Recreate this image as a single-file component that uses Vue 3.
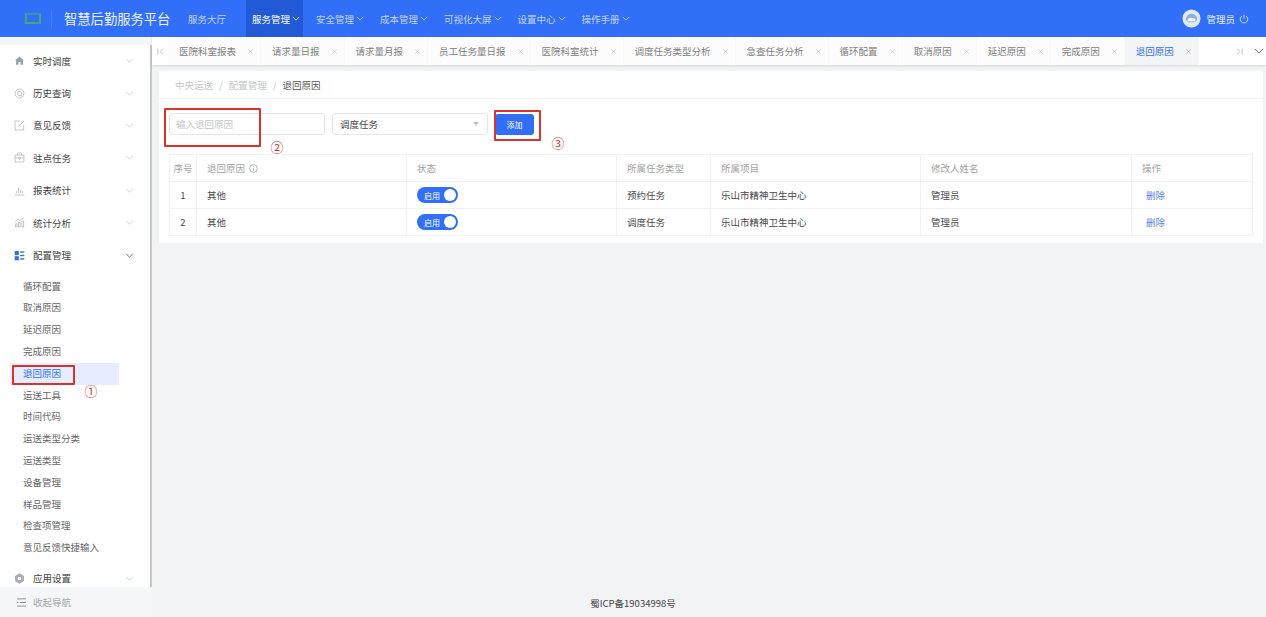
<script setup>
const navItems = [
  { label: '服务大厅', arrow: false },
  { label: '服务管理', arrow: true, active: true },
  { label: '安全管理', arrow: true },
  { label: '成本管理', arrow: true },
  { label: '可视化大屏', arrow: true },
  { label: '设置中心', arrow: true },
  { label: '操作手册', arrow: true }
]

const tabs = [
  '医院科室报表', '请求量日报', '请求量月报', '员工任务量日报', '医院科室统计', '调度任务类型分析',
  '急查任务分析', '循环配置', '取消原因', '延迟原因', '完成原因', '退回原因'
]

const menuTop = [
  { label: '实时调度', paths: ['M1.500 8 8 2l6.500 6H13v6H9.500v-4h-3v4H3V8z'], fill: true },
  { label: '历史查询', paths: ['M8 1.500a6.500 6.500 0 1 0 0 13 6.500 6.500 0 0 0 0-13z', 'M8 5a3 3 0 1 0 0 6 3 3 0 0 0 0-6z', 'M10.500 10.500l2 2'] },
  { label: '意见反馈', paths: ['M14 8v6.500H1.500v-13H9', 'M6.500 9.500l8-8'] },
  { label: '驻点任务', paths: ['M1.500 4.500h13v10h-13z', 'M5 4.500V1.500h6v3', 'M1.500 8.500h13', 'M7 8.500h2v2H7z'] },
  { label: '报表统计', paths: ['M1 14.500h14', 'M3.500 12V9', 'M6.500 12V4', 'M9.500 12V7', 'M12.500 12V9'] },
  { label: '统计分析', paths: ['M2 14.500V10h2.500v4.500z', 'M6.500 14.500V8H9v6.500z', 'M11.500 14.500V6H14v8.500z', 'M1.500 7 5.500 3.500l3 1.500 5-3.500'] }
]

const subMenu = [
  '循环配置', '取消原因', '延迟原因', '完成原因', '退回原因', '运送工具', '时间代码',
  '运送类型分类', '运送类型', '设备管理', '样品管理', '检查项管理', '意见反馈快捷输入'
]

const rows = [
  { id: 1, reason: '其他', type: '预约任务', project: '乐山市精神卫生中心', editor: '管理员' },
  { id: 2, reason: '其他', type: '调度任务', project: '乐山市精神卫生中心', editor: '管理员' }
]
</script>

<template>
  <div class="app">
    <header class="topbar">
      <div class="logo"><span class="logo-mark"></span></div>
      <div class="title">智慧后勤服务平台</div>
      <nav class="nav">
        <a v-for="item in navItems" :key="item.label" class="nav-item" :class="{ active: item.active }">
          {{ item.label }}
          <svg v-if="item.arrow" class="nav-arrow" viewBox="0 0 10 6"><path d="M1 1l4 4 4-4" /></svg>
        </a>
      </nav>
      <div class="user">
        <svg class="avatar" viewBox="0 0 20 20">
          <circle cx="10" cy="10" r="9.500" fill="#dfe9f8" />
          <path d="M4 11c0-3 2.600-6 6-6s6 3 6 6c-1 2-3 3-6 3s-5-1-6-3z" fill="#8fb0dc" />
          <path d="M6 10.500c1.500-1.500 6.500-1.500 8 0v2.500H6z" fill="#f4f7fc" />
        </svg>
        <span class="user-name">管理员</span>
        <svg class="power" viewBox="0 0 12 12"><path d="M3.500 2.500a4.500 4.500 0 1 0 5 0" /><path d="M6 1v4.500" /></svg>
      </div>
    </header>

    <div class="body">
      <aside class="aside">
        <div class="menu">
          <div v-for="m in menuTop" :key="m.label" class="menu-row">
            <svg class="menu-icon" :class="{ filled: m.fill }" viewBox="0 0 16 16"><path v-for="d in m.paths" :key="d" :d="d" /></svg>
            <span class="menu-label">{{ m.label }}</span>
            <svg class="menu-arrow" viewBox="0 0 10 6"><path d="M1 1l4 4 4-4" /></svg>
          </div>
          <div class="menu-row">
            <svg class="menu-icon grid-icon" viewBox="0 0 16 16">
              <rect x="1" y="1.500" width="6" height="6" />
              <rect x="1" y="9" width="6" height="6" />
              <rect x="9" y="2" width="6" height="2" />
              <rect x="9" y="7" width="6" height="2" />
              <rect x="9" y="12" width="6" height="2" />
            </svg>
            <span class="menu-label">配置管理</span>
            <svg class="menu-arrow open" viewBox="0 0 10 6"><path d="M1 1l4 4 4-4" /></svg>
          </div>
          <div class="submenu">
            <div v-for="s in subMenu" :key="s" class="sub-row" :class="{ active: s === '退回原因' }">{{ s }}</div>
          </div>
          <div class="menu-row">
            <svg class="menu-icon gear" viewBox="0 0 16 16">
              <path d="M8 0.500l6.500 3.700v7.600L8 15.500l-6.500-3.700V4.200z" />
              <circle cx="8" cy="8" r="2.500" fill="#fff" />
            </svg>
            <span class="menu-label">应用设置</span>
            <svg class="menu-arrow" viewBox="0 0 10 6"><path d="M1 1l4 4 4-4" /></svg>
          </div>
        </div>
        <div class="collapse">
          <svg class="collapse-icon" viewBox="0 0 12 10"><path d="M1 1h10M4 5h7M1 5h1.500M1 9h10" /></svg>
          <span>收起导航</span>
        </div>
      </aside>

      <main class="main">
        <div class="tabs">
          <svg class="tab-edge left" viewBox="0 0 8 8"><path d="M1 0.500v7M6.500 1 3.500 4l3 3" /></svg>
          <div class="tab-list">
            <div v-for="t in tabs" :key="t" class="tab" :class="{ active: t === '退回原因' }">
              <span>{{ t }}</span>
              <svg class="tab-close" viewBox="0 0 6 6"><path d="M0.500 0.500l5 5M5.500 0.500l-5 5" /></svg>
            </div>
          </div>
          <svg class="tab-edge right" viewBox="0 0 8 8"><path d="M7 0.500v7M1.500 1l3 3-3 3" /></svg>
          <svg class="tab-more" viewBox="0 0 12 7"><path d="M1 1l5 5 5-5" /></svg>
        </div>

        <div class="page">
          <section class="card">
            <div class="crumbs">
              <span class="crumb">中央运送</span>
              <span class="crumb sep">/</span>
              <span class="crumb">配置管理</span>
              <span class="crumb sep">/</span>
              <span class="crumb current">退回原因</span>
            </div>
            <div class="card-body">
              <div class="filters">
                <input class="text-input" placeholder="输入退回原因" />
                <div class="select">
                  <span>调度任务</span>
                  <i class="caret"></i>
                </div>
                <button class="add-btn">添加</button>
              </div>

              <div class="table">
                <div class="tr head">
                  <div class="td center">序号</div>
                  <div class="td">
                    退回原因
                    <svg class="info" viewBox="0 0 10 10">
                      <circle cx="5" cy="5" r="4.300" />
                      <path d="M5 4.500v3M5 2.500v1" />
                    </svg>
                  </div>
                  <div class="td">状态</div>
                  <div class="td">所属任务类型</div>
                  <div class="td">所属项目</div>
                  <div class="td">修改人姓名</div>
                  <div class="td">操作</div>
                </div>
                <div v-for="row in rows" :key="row.id" class="tr">
                  <div class="td center">{{ row.id }}</div>
                  <div class="td">{{ row.reason }}</div>
                  <div class="td">
                    <span class="switch"><span class="switch-text">启用</span><i class="switch-dot"></i></span>
                  </div>
                  <div class="td">{{ row.type }}</div>
                  <div class="td">{{ row.project }}</div>
                  <div class="td">{{ row.editor }}</div>
                  <div class="td"><a class="link">删除</a></div>
                </div>
              </div>
            </div>
          </section>
          <footer class="beian">蜀ICP备19034998号</footer>
        </div>
      </main>
    </div>

    <!-- 教程标注，盖在页面上 -->
    <div class="mark mark-1"></div>
    <div class="mark mark-2"></div>
    <div class="mark mark-3"></div>
    <span class="mark-no no-1">①</span>
    <span class="mark-no no-2">②</span>
    <span class="mark-no no-3">③</span>
  </div>
</template>

<style>
html,
body {
  margin: 0;
  background: #f2f3f5;
}
</style>

<style scoped>
.app {
  position: relative;
  display: flex;
  flex-direction: column;
  height: 617px;
  overflow: hidden;
  font-family: "Noto Sans CJK SC", "Noto Sans", sans-serif;
  font-size: 9.5px;
  color: #333;
}

.topbar {
  display: flex;
  align-items: center;
  flex: none;
  height: 37px;
  background: #326ff9;
  color: #fff;
}

.logo {
  display: flex;
  align-items: center;
  width: 52px;
  height: 18px;
  padding-left: 25px;
  box-sizing: border-box;
  border-right: 1px solid rgba(255, 255, 255, 0.1);
}

.logo-mark {
  width: 16px;
  height: 11px;
  box-sizing: border-box;
  border: 2px solid #45a874;
  border-top-color: #3f8fa8;
  border-bottom-color: #45a874;
}

.title {
  margin-left: 12px;
  width: 118px;
  font-size: 13.3px;
  white-space: nowrap;
  color: #eaf1ff;
}

.nav {
  display: flex;
  align-items: stretch;
  height: 37px;
  gap: 7px;
}

.nav-item {
  display: flex;
  align-items: center;
  gap: 2px;
  padding: 0 3px 0 6px;
  color: rgba(255, 255, 255, 0.7);
  white-space: nowrap;
}

.nav-item:first-child {
  margin-right: 10px;
}

.nav-item.active {
  background: #2259d6;
  color: #fff;
}

.nav-arrow {
  width: 8px;
  height: 5px;
  fill: none;
  stroke: currentColor;
  stroke-width: 1;
}

.user {
  display: flex;
  align-items: center;
  margin-left: auto;
  padding-right: 17px;
}

.avatar {
  width: 19px;
  height: 19px;
}

.user-name {
  margin-left: 5px;
  color: #e6eeff;
}

.power {
  width: 10px;
  height: 10px;
  margin-left: 4px;
  fill: none;
  stroke: #e6eeff;
  stroke-width: 1;
}

.body {
  display: flex;
  flex: 1;
  min-height: 0;
}

.aside {
  display: flex;
  flex-direction: column;
  flex: none;
  width: 152px;
  background: #f5f6f7;
}

.menu {
  flex: 1;
  min-height: 0;
  overflow: hidden;
  margin-top: 7.5px;
  background: #fff;
  border-right: 2px solid #c6c8cb;
}

.menu-row {
  display: flex;
  align-items: center;
  height: 32.4px;
  padding-left: 14px;
  color: #444;
}

.menu-icon {
  flex: none;
  width: 11px;
  height: 11px;
  fill: none;
  stroke: #a9adb3;
  stroke-width: 1;
}

.menu-icon.filled {
  fill: #9aa0a8;
  stroke: none;
}

.grid-icon {
  fill: #2f6fe0;
  stroke: none;
}

.gear {
  fill: #a9adb3;
  stroke: none;
}

.menu-label {
  margin-left: 8px;
}

.menu-arrow {
  width: 9px;
  height: 5px;
  margin-left: 54px;
  fill: none;
  stroke: #c6c9ce;
  stroke-width: 1;
}

.menu-arrow.open {
  stroke: #555;
}

.submenu {
  padding: 4.4px 0 3px;
}

.sub-row {
  width: 96px;
  height: 21.8px;
  margin-left: 10px;
  padding-left: 13px;
  line-height: 21.8px;
  color: #666;
}

.sub-row.active {
  background: #e5edfe;
  color: #326ff9;
}

.collapse {
  display: flex;
  align-items: center;
  flex: none;
  height: 30px;
  padding-left: 16px;
  color: #a3a6ab;
}

.collapse-icon {
  width: 11px;
  height: 9px;
  margin-right: 6px;
  fill: none;
  stroke: #888;
  stroke-width: 1;
}

.main {
  display: flex;
  flex-direction: column;
  flex: 1;
  min-width: 0;
}

.tabs {
  display: flex;
  align-items: center;
  flex: none;
  height: 28px;
  background: #fff;
  box-shadow: 0 1px 2px rgba(0, 0, 0, 0.12);
  color: #808080;
}

.tab-edge {
  flex: none;
  width: 7px;
  height: 7px;
  fill: none;
  stroke: #bbb;
  stroke-width: 1;
}

.tab-edge.left {
  margin: 0 4px 0 5px;
}

.tab-edge.right {
  margin-left: 37px;
}

.tab-list {
  display: flex;
  height: 100%;
}

.tab {
  display: flex;
  align-items: center;
  height: 100%;
  box-sizing: border-box;
  padding: 0 7px 0 11px;
  gap: 12px;
  background: #fcfcfc;
  border-right: 1px solid #f8f8f8;
  white-space: nowrap;
}

.tab.active {
  background: #f3f4f6;
  color: #326ff9;
}

.tab-close {
  flex: none;
  width: 5px;
  height: 5px;
  fill: none;
  stroke: #c4c4c4;
  stroke-width: 0.8;
}

.tab.active .tab-close {
  stroke: #8aa9ee;
}

.tab-more {
  flex: none;
  width: 10px;
  height: 6px;
  margin-left: 11px;
  fill: none;
  stroke: #555;
  stroke-width: 1;
}

.page {
  display: flex;
  flex-direction: column;
  flex: 1;
  min-height: 0;
  padding: 6px 3px 0 7px;
}

.card {
  background: #fff;
  flex: none;
}

.crumbs {
  display: flex;
  align-items: center;
  gap: 6px;
  height: 28px;
  padding-left: 16px;
  border-bottom: 1px solid #f2f2f2;
  box-sizing: border-box;
}

.crumb {
  color: #c4c6ca;
}

.crumb.current {
  color: #555;
}

.card-body {
  padding: 14px 10px 7px;
}

.filters {
  display: flex;
  align-items: center;
  gap: 7px;
  height: 22px;
  margin-bottom: 20px;
}

.text-input {
  width: 156px;
  height: 22px;
  box-sizing: border-box;
  padding: 0 6px;
  border: 1px solid #e3e5e8;
  border-radius: 3px;
  outline: none;
  font: inherit;
  color: #333;
}

.text-input::placeholder {
  color: #c4c6ca;
}

.select {
  display: flex;
  align-items: center;
  justify-content: space-between;
  width: 156px;
  height: 22px;
  box-sizing: border-box;
  padding: 0 8px 0 7px;
  border: 1px solid #e3e5e8;
  border-radius: 3px;
  color: #444;
}

.caret {
  width: 0;
  height: 0;
  border-left: 3.5px solid transparent;
  border-right: 3.5px solid transparent;
  border-top: 4px solid #bfc2c6;
}

.add-btn {
  width: 39px;
  height: 21px;
  padding: 0;
  border: none;
  border-radius: 3px;
  background: #326ff9;
  color: #fff;
  font: inherit;
  font-size: 8px;
}

.table {
  border: 1px solid #f0f1f2;
  border-bottom: none;
  margin-top: -1px;
}

.tr {
  display: grid;
  grid-template-columns: 27px 210px 210px 94px 210px 211px 1fr;
  height: 27px;
  border-bottom: 1px solid #f0f1f2;
  box-sizing: border-box;
  color: #4a4a4a;
}

.tr.head {
  color: #a3a3a3;
}

.td {
  display: flex;
  align-items: center;
  padding-left: 10px;
  border-right: 1px solid #f0f1f2;
  min-width: 0;
  white-space: nowrap;
}

.td:last-child {
  border-right: none;
}

.td.center {
  justify-content: center;
  padding-left: 0;
}

.info {
  width: 9px;
  height: 9px;
  margin-left: 4px;
  fill: none;
  stroke: #999;
  stroke-width: 0.8;
}

.switch {
  display: flex;
  align-items: center;
  justify-content: space-between;
  box-sizing: border-box;
  width: 41px;
  height: 16px;
  padding: 0 2px 0 7px;
  border-radius: 8px;
  background: #326ff9;
  color: #fff;
  font-size: 8px;
}

.switch-dot {
  width: 12px;
  height: 12px;
  border-radius: 50%;
  background: #fff;
}

.link {
  margin-left: 4px;
  color: #5b86e5;
}

.beian {
  margin-top: auto;
  height: 24px;
  line-height: 21px;
  text-align: center;
  color: #444;
  padding-right: 156px;
}

.mark {
  position: absolute;
  box-sizing: border-box;
  border: 2px solid #d9332b;
  border-radius: 1px;
}

.mark-1 {
  left: 12px;
  top: 365px;
  width: 63px;
  height: 20px;
}

.mark-2 {
  left: 164px;
  top: 108px;
  width: 97px;
  height: 39px;
}

.mark-3 {
  left: 494px;
  top: 110px;
  width: 47px;
  height: 31px;
}

.mark-no {
  position: absolute;
  width: 14px;
  height: 14px;
  line-height: 14px;
  text-align: center;
  font-size: 13px;
  color: #d9332b;
}

.no-1 {
  left: 84px;
  top: 384px;
}

.no-2 {
  left: 270px;
  top: 140px;
}

.no-3 {
  left: 551px;
  top: 136px;
}
</style>
